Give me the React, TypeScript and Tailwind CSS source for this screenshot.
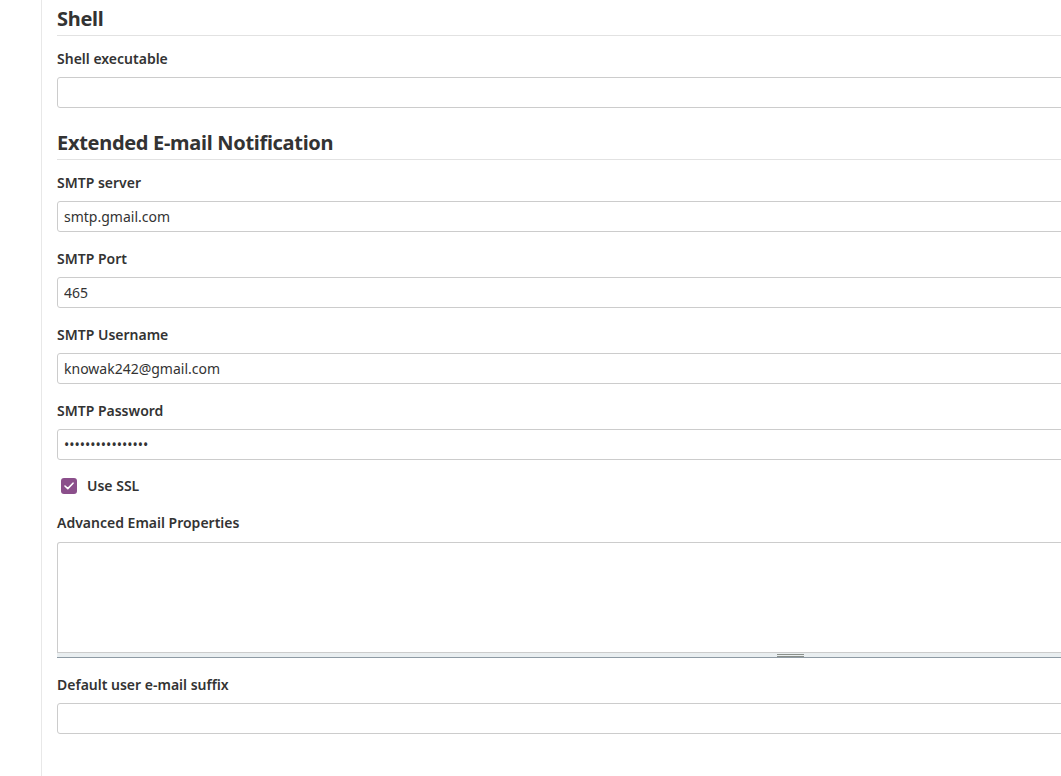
import { useState } from "react";

const font = { fontFamily: "'Noto Sans', 'DejaVu Sans', sans-serif" };

function Heading({ title }: { title: string }) {
    return (
        <h2 className="pt-[5px] pb-[2px] border-b border-[#e2e2e2] text-[20px] leading-[28px] font-bold tracking-[-0.3px] text-[#333]">
            {title}
        </h2>
    );
}

function Field({ label, value = "", type = "text" }: { label: string; value?: string; type?: string }) {
    return (
        <div className="mb-[17px]">
            <label className="block text-[14px] leading-[20px] font-semibold text-[#333] mb-2">{label}</label>
            <input
                type={type}
                defaultValue={value}
                className="block w-full h-[31px] px-[6px] border border-[#cccccc] rounded-[3px] bg-white text-[14px] text-[#333] outline-none"
            />
        </div>
    );
}

export default function App() {
    const [ssl, setSsl] = useState<boolean>(true);

    return (
        <div className="flex w-[1061px] h-[776px] overflow-hidden bg-white" style={font}>
            {/* left side panel */}
            <div className="w-[42px] shrink-0 border-r border-[#e8e8e8]" />
            {/* config form */}
            <div className="w-[1100px] shrink-0 pl-[15px] flex flex-col">
                <Heading title="Shell" />
                <div className="mt-[13px] flex flex-col">
                    <div className="-mb-px">
                        <Field label="Shell executable" />
                    </div>
                </div>

                <Heading title="Extended E-mail Notification" />
                <div className="mt-[13px] flex flex-col">
                    <Field label="SMTP server" value="smtp.gmail.com" />
                    <Field label="SMTP Port" value="465" />
                    <Field label="SMTP Username" value="knowak242@gmail.com" />
                    <Field label="SMTP Password" value="aaaaaaaaaaaaaaaa" type="password" />

                    {/* Use SSL checkbox */}
                    <div className="flex items-center h-[20px] -mt-px mb-[17px] pl-[4px] cursor-pointer" onClick={() => setSsl(!ssl)}>
                        <div className={"w-4 h-4 rounded-[3px] flex items-center justify-center " + (ssl ? "bg-[#8b4f8b]" : "border border-[#999] bg-white")}>
                            {ssl && (
                                <svg width="10" height="8" viewBox="0 0 10 8" fill="none">
                                    <path d="M1 4 L3.8 6.6 L9 1.2" stroke="white" strokeWidth="1.6" strokeLinecap="round" strokeLinejoin="round" />
                                </svg>
                            )}
                        </div>
                        <span className="ml-[10px] text-[14px] leading-[20px] font-semibold text-[#333]">Use SSL</span>
                    </div>

                    {/* textarea with resize bar */}
                    <div className="mb-[17px]">
                        <label className="block text-[14px] leading-[20px] font-semibold text-[#333] mb-[9px]">Advanced Email Properties</label>
                        <div>
                            <textarea className="block w-full h-[110px] border border-[#cccccc] border-b-0 rounded-t-[3px] bg-white resize-none outline-none" />
                            <div className="h-[6px] border-t border-[#cccccc] border-b border-b-[#8e9aa4] bg-[#e9eef0] flex">
                                <div className="ml-[720px] w-[27px] mt-[1px] flex flex-col gap-[1px]">
                                    <div className="h-px bg-[#8a8f8a]" />
                                    <div className="h-px bg-[#8a8f8a]" />
                                </div>
                            </div>
                        </div>
                    </div>

                    <Field label="Default user e-mail suffix" />
                </div>
            </div>
        </div>
    );
}
